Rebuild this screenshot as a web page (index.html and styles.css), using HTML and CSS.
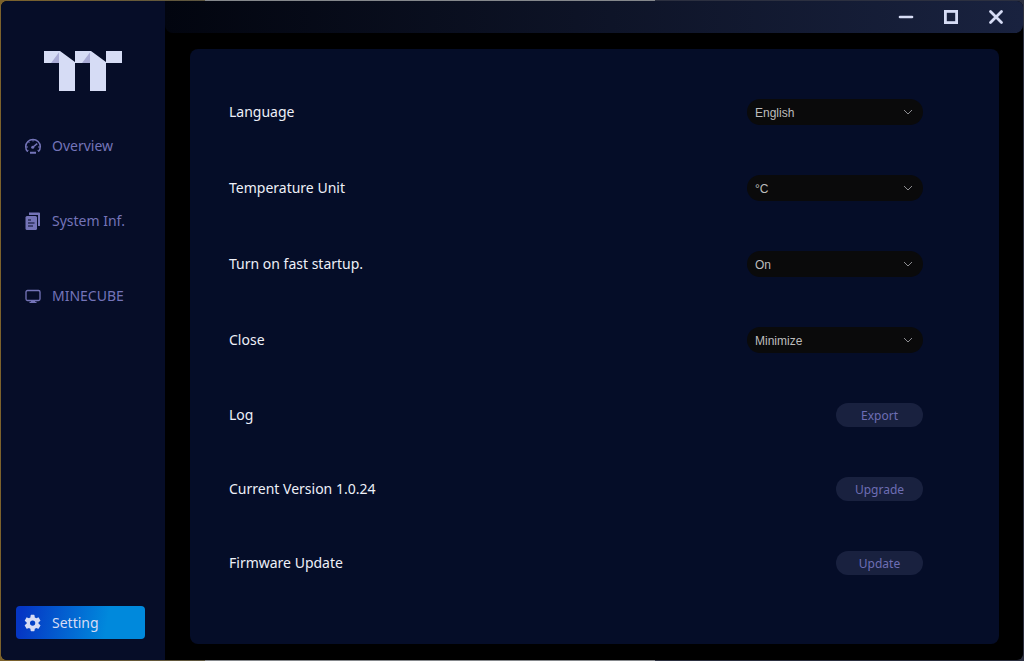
FILE: index.html
```html
<!DOCTYPE html>
<html lang="en">
<head>
    <meta charset="UTF-8">
    <meta name="viewport" content="width=device-width, initial-scale=1.0">
    <title>Setting</title>
    <link rel="stylesheet" href="styles.css">
</head>
<body>
    <div class="window">
        <aside class="sidebar">
            <svg class="logo" viewBox="0 0 78 40" role="img" aria-label="TT">
                <path fill="#d6dcf5" d="M0 0H16V12H0ZM31 0H47V12H31ZM62 0H78V12H62Z"/>
                <path fill="#a9abd6" d="M16 0V12H7ZM47 0V12H38Z"/>
                <path fill="#d6dcf5" d="M15 0H16L31 11V40H15ZM46 0H47L62 11V40H46Z"/>
            </svg>
            <nav class="menu">
                <a class="menu-item" href="#overview">
                    <svg viewBox="0 0 18 18" fill="none" stroke="currentColor" stroke-width="1.5">
                        <path d="M3.6 14.6A7.3 7.3 0 1 1 14.4 14.6"/>
                        <path d="M9 2V4.500M4 4.500L5.500 6M2 10H4M14 10H16M3 14.600L4.500 13.400M15 14.600L13.500 13.400" stroke-width="1"/>
                        <path d="M9 10L13.200 6.600"/>
                        <circle cx="8.700" cy="10.200" r="1.500" fill="currentColor" stroke="none"/>
                        <path d="M6 15.700H12" stroke-width="2"/>
                    </svg>
                    Overview
                </a>
                <a class="menu-item" href="#system">
                    <svg viewBox="0 0 18 18">
                        <path fill="currentColor" d="M5 0.500H15Q16 0.500 16 1.500V14H14V3H5Z"/>
                        <rect x="1.500" y="4" width="11.500" height="14" rx="1.500" fill="currentColor"/>
                        <path stroke="#060d28" stroke-width="1.200" d="M4 8H7M4 11H10.500M4 14H9"/>
                    </svg>
                    System Inf.
                </a>
                <a class="menu-item" href="#minecube">
                    <svg viewBox="0 0 18 18">
                        <rect x="2" y="3.500" width="14" height="10" rx="1.500" fill="none" stroke="currentColor" stroke-width="1.300"/>
                        <path fill="currentColor" d="M7 13.500H11V14.700H12.500V16H5.500V14.700H7Z"/>
                    </svg>
                    MINECUBE
                </a>
            </nav>
            <a class="menu-item active" href="#setting">
                <svg viewBox="0 0 24 24">
                    <path fill="currentColor" d="M19.400 13a7.500 7.500 0 0 0 0-2l2.300-1.800a.6.6 0 0 0 .1-.7l-2.200-3.800a.6.6 0 0 0-.7-.2l-2.700 1a8 8 0 0 0-1.800-1L14 1.600a.6.6 0 0 0-.6-.5h-4a.6.6 0 0 0-.5.500l-.4 2.900a8 8 0 0 0-1.800 1L4 4.500a.6.6 0 0 0-.7.200L1.100 8.500a.6.6 0 0 0 .1.700L3.500 11a7.500 7.500 0 0 0 0 2l-2.300 1.800a.6.6 0 0 0-.1.700l2.200 3.800c.1.300.4.300.7.200l2.700-1a8 8 0 0 0 1.800 1l.4 2.900c0 .3.300.5.500.5h4c.300 0 .5-.2.600-.5l.4-2.900a8 8 0 0 0 1.800-1l2.700 1c.3.100.6 0 .7-.2l2.200-3.800a.6.6 0 0 0-.1-.7ZM11.500 15.500a3.500 3.500 0 1 1 0-7a3.500 3.500 0 0 1 0 7Z"/>
                </svg>
                Setting
            </a>
        </aside>

        <div class="content">
            <header class="titlebar">
                <button type="button" aria-label="Minimize">
                    <svg viewBox="0 0 16 16"><path d="M2 8H14" stroke-width="2.600" stroke-linecap="round"/></svg>
                </button>
                <button type="button" aria-label="Maximize">
                    <svg viewBox="0 0 16 16"><rect x="2.400" y="2.400" width="11.200" height="11.200" stroke-width="2.800"/></svg>
                </button>
                <button type="button" aria-label="Close window">
                    <svg viewBox="0 0 16 16"><path d="M2.500 2.500L13.500 13.500M13.500 2.500L2.500 13.500" stroke-width="2.800" stroke-linecap="round"/></svg>
                </button>
            </header>

            <main class="panel">
                <div class="row">
                    <label for="language">Language</label>
                    <div class="select">
                        <select id="language"><option>English</option></select>
                        <svg viewBox="0 0 10 6"><path d="M1 1L5 5L9 1"/></svg>
                    </div>
                </div>
                <div class="row">
                    <label for="unit">Temperature Unit</label>
                    <div class="select">
                        <select id="unit"><option>°C</option><option>°F</option></select>
                        <svg viewBox="0 0 10 6"><path d="M1 1L5 5L9 1"/></svg>
                    </div>
                </div>
                <div class="row">
                    <label for="startup">Turn on fast startup.</label>
                    <div class="select">
                        <select id="startup"><option>On</option><option>Off</option></select>
                        <svg viewBox="0 0 10 6"><path d="M1 1L5 5L9 1"/></svg>
                    </div>
                </div>
                <div class="row">
                    <label for="close">Close</label>
                    <div class="select">
                        <select id="close"><option>Minimize</option></select>
                        <svg viewBox="0 0 10 6"><path d="M1 1L5 5L9 1"/></svg>
                    </div>
                </div>
                <div class="row">
                    <label for="export">Log</label>
                    <button type="button" class="btn" id="export">Export</button>
                </div>
                <div class="row">
                    <label for="upgrade">Current Version 1.0.24</label>
                    <button type="button" class="btn" id="upgrade">Upgrade</button>
                </div>
                <div class="row">
                    <label for="update">Firmware Update</label>
                    <button type="button" class="btn" id="update">Update</button>
                </div>
            </main>
        </div>
    </div>
</body>
</html>
```
FILE: styles.css
```css
* {
    box-sizing: border-box;
}
body {
    margin: 0;
    min-height: 100vh;
    padding: 1px;
    display: flex;
    font-family: Tahoma, "Noto Sans", sans-serif;
    font-size: 14px;
    line-height: 18px;
    /* desktop showing round the window */
    background: linear-gradient(to right, #7c622c 0, #5d5640 20%, #85888c 20%, #85888c 64%, #2c3040 64%, #2c3040 100%);
}
.window {
    flex: 1;
    display: flex;
    background: #000;
    border-radius: 6px;
    overflow: hidden;
}
.sidebar {
    width: 164px;
    padding: 50px 20px 21px 15px;
    display: flex;
    flex-direction: column;
    background: #060d28;
}
.logo {
    width: 78px;
    height: 40px;
    margin-left: 28px;
}
.menu {
    flex: 1;
    display: flex;
    flex-direction: column;
    gap: 42px;
    margin-top: 38px;
}
.menu-item {
    display: flex;
    align-items: center;
    gap: 10px;
    height: 33px;
    padding: 0 8px;
    border-radius: 4px;
    color: #7474b8;
    text-decoration: none;
    white-space: nowrap;
}
.menu-item svg {
    width: 18px;
    height: 18px;
}
.menu-item.active {
    color: #d6dcf5;
    background: linear-gradient(100deg, #0536c4 5%, #0089dc 70%);
}
.content {
    flex: 1;
    display: flex;
    flex-direction: column;
}
.titlebar {
    display: flex;
    justify-content: flex-end;
    align-items: center;
    gap: 29px;
    height: 32px;
    padding-right: 19px;
    border-radius: 0 0 8px 8px;
    background: linear-gradient(to right, #02050f, #19223f);
}
.titlebar button {
    display: flex;
    padding: 0;
    border: none;
    background: none;
    cursor: pointer;
}
.titlebar svg {
    width: 16px;
    height: 16px;
    fill: none;
    stroke: #d6dcf5;
}
.panel {
    flex: 1;
    display: flex;
    flex-direction: column;
    gap: 50px;
    margin: 16px 24px 16px 25px;
    padding: 50px 76px 49px 39px;
    border-radius: 8px;
    background: #050d28;
}
.row {
    display: flex;
    justify-content: space-between;
    align-items: center;
    color: #eef0f8;
}
.select {
    position: relative;
    width: 176px;
    height: 26px;
}
.select select {
    appearance: none;
    width: 100%;
    height: 100%;
    padding: 1px 24px 0 8px;
    border: none;
    border-radius: 13px;
    background: #0a0a0b;
    color: #bdbdbd;
    font: 12px "Liberation Sans", Arial, sans-serif;
}
/* arrow on top of the select */
.select svg {
    position: absolute;
    top: 10px;
    right: 10px;
    width: 10px;
    height: 6px;
    fill: none;
    stroke: #8c8c90;
    pointer-events: none;
}
.btn {
    width: 87px;
    height: 24px;
    padding: 0;
    border: none;
    border-radius: 12px;
    background: #19213f;
    color: #6e6eb4;
    font-family: inherit;
    font-size: 12px;
    cursor: pointer;
}
```
